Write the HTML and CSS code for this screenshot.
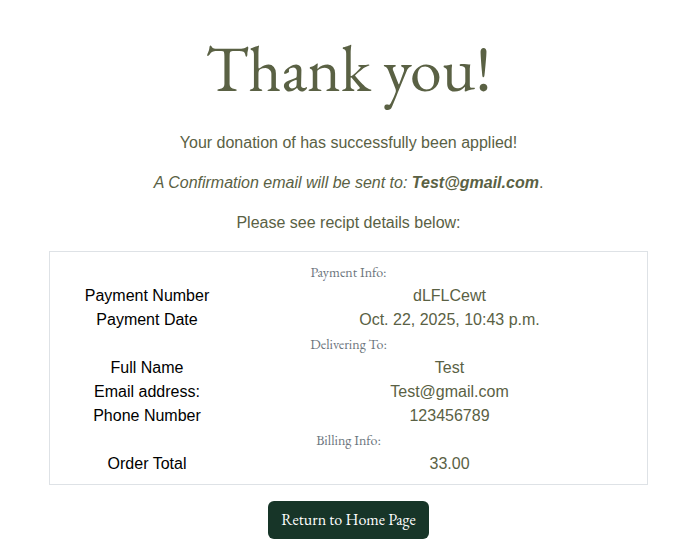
FILE: index.html
```html
<!DOCTYPE html>
<html lang="en">
<head>
<meta charset="utf-8">
<meta name="viewport" content="width=device-width, initial-scale=1">
<title>Thank you</title>
<link rel="stylesheet" href="styles.css">
</head>
<body>
<main class="page">
  <h1 class="title">Thank you!</h1>
  <p class="message">Your donation of has successfully been applied!</p>
  <p class="message"><em>A Confirmation email will be sent to: <strong>Test@gmail.com</strong></em>.</p>
  <p class="message">Please see recipt details below:</p>
  <section class="receipt">
    <table class="details">
      <colgroup><col class="label-column"><col></colgroup>
      <tbody>
        <tr><th class="group" colspan="2" scope="rowgroup">Payment Info:</th></tr>
        <tr><th class="label" scope="row">Payment Number</th><td class="value">dLFLCewt</td></tr>
        <tr><th class="label" scope="row">Payment Date</th><td class="value">Oct. 22, 2025, 10:43 p.m.</td></tr>
      </tbody>
      <tbody>
        <tr><th class="group" colspan="2" scope="rowgroup">Delivering To:</th></tr>
        <tr><th class="label" scope="row">Full Name</th><td class="value">Test</td></tr>
        <tr><th class="label" scope="row">Email address:</th><td class="value">Test@gmail.com</td></tr>
        <tr><th class="label" scope="row">Phone Number</th><td class="value">123456789</td></tr>
      </tbody>
      <tbody>
        <tr><th class="group" colspan="2" scope="rowgroup">Billing Info:</th></tr>
        <tr><th class="label" scope="row">Order Total</th><td class="value">33.00</td></tr>
      </tbody>
    </table>
  </section>
  <a class="home-button" href="#">Return to Home Page</a>
</main>
</body>
</html>
```
FILE: styles.css
```css
* {
  box-sizing: border-box;
}

body {
  margin: 0;
  background: #fff;
  color: #5a6144;
  font: 16px/24px "Liberation Sans", Arial, sans-serif;
}

.page {
  padding: 31px 41px 20px 49px;
  text-align: center;
}

.title {
  margin: 0 0 24px;
  color: #5a6144;
  font: 400 64px/76px "EB Garamond", "Liberation Serif", serif;
}

.message {
  margin: 0 0 16px;
}

.receipt {
  margin-bottom: 16px;
  padding: 8px 0;
  border: 1px solid #dee2e6;
}

.details {
  width: 100%;
  border-collapse: collapse;
  table-layout: fixed;
}

.label-column {
  width: 32.5%;
}

.details th,
.details td {
  height: 24px;
  padding: 0;
  font-weight: 400;
}

.details .label {
  color: #000;
}

.details .value {
  padding-left: 8px;
}

.details .group {
  font: 400 14px/24px "EB Garamond", "Liberation Serif", serif;
  color: #6c757d;
}

.home-button {
  display: inline-block;
  padding: 7px 13px;
  border-radius: 6px;
  background: #173528;
  color: #fff;
  font: 400 16px/24px "EB Garamond", "Liberation Serif", serif;
  text-decoration: none;
}
```
